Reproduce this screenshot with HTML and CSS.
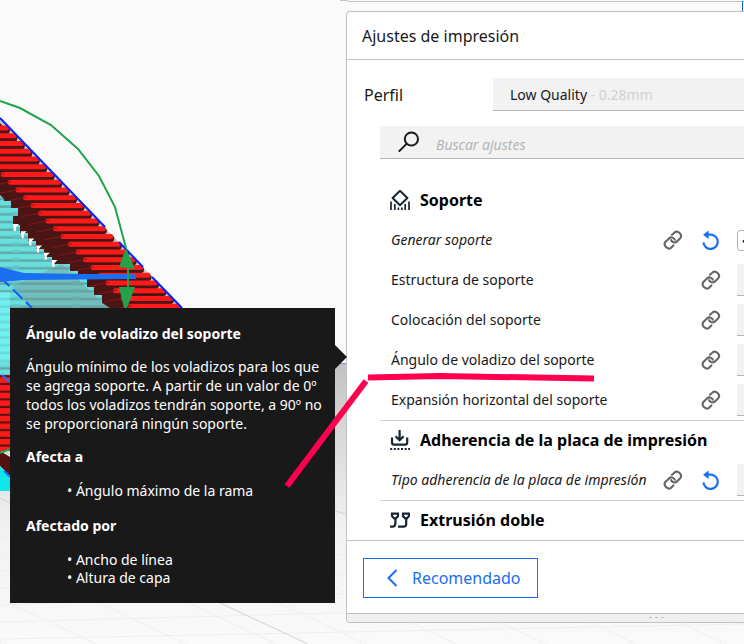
FILE: index.html
```html
<!DOCTYPE html>
<html lang="es">
<head>
    <meta charset="UTF-8">
    <meta name="viewport" content="width=device-width, initial-scale=1.0">
    <title>Ajustes de impresión</title>
    <link rel="stylesheet" href="styles.css">
</head>
<body>
    <!-- icons shared by the setting rows -->
    <svg class="sprite" aria-hidden="true">
        <symbol id="link" viewBox="0 0 20 20">
            <g fill="none" stroke="#666" stroke-width="2.1" stroke-linecap="round" stroke-linejoin="round">
                <path d="M9 4.8 L11.6 2.4 C14.8 -.2 19.8 4.6 17.4 8 L14 11.4 C11.8 13.3 9.2 12.4 8.2 10.2"/>
                <path d="M11.8 9.6 C10.6 7.2 8 6.6 6 8.4 L2.4 12 C-.2 15.4 4.6 20.2 8 17.8 L10.4 15.4"/>
            </g>
        </symbol>
        <symbol id="undo" viewBox="0 0 20 20">
            <path d="M6 4.6 H10.4 A7.2 7.2 0 1 1 2.4 12.4" fill="none" stroke="#196ef0" stroke-width="2.2"/>
            <path d="M7.6 .4 L2 4.7 L7.6 9 Z" fill="#196ef0"/>
        </symbol>
    </svg>

    <svg class="scene" width="744" height="644" aria-hidden="true">
        <defs>
            <linearGradient id="floor" x1="0" y1="0" x2="0" y2="1">
                <stop offset="0" stop-color="#c2c2c2"/>
                <stop offset=".25" stop-color="#d8d8d8"/>
                <stop offset=".6" stop-color="#f2f2f2"/>
                <stop offset="1" stop-color="#fafafa"/>
            </linearGradient>
            <pattern id="cyanRows" width="60" height="7.7" patternUnits="userSpaceOnUse">
                <rect width="60" height="7.7" fill="#69dede"/>
                <rect y="5.2" width="60" height="2.5" fill="#62a9a9"/>
                <rect x="12" y="4" width="8" height="3" fill="#5cc5c5"/>
            </pattern>
            <pattern id="redRows" width="20" height="7.7" patternUnits="userSpaceOnUse">
                <rect width="20" height="7.7" fill="#ff1a1a"/>
                <rect y="5.6" width="20" height="2.1" fill="#551010"/>
            </pattern>
        </defs>
        <rect y="363" width="744" height="281" fill="url(#floor)"/>
        <path d="M330 363.5 H350" stroke="#7f96d8"/>
        <g id="grid" fill="none" stroke="#eee"></g>
        <path d="M0 498 L12 504 M220 603 L308 644 M335 511 L346 514" stroke="#d2d2d2" fill="none"/>

        <path d="M0 118 L182 308 H0 Z" fill="#c9c9c9"/>
        <path d="M0 123 L176 308 H80 L40 270 L0 225 Z" fill="#4a1515"/>
        <g id="redLayers" fill="#ff1a1a"></g>
        <path d="M0 195 L4 199 V201 H11 V208 H18 V216 H13 V225 H20 V233 H28 V241 H36 V249 H44 V257 H52 V264 H70 V271 H78 V279 H87 V287 H94 V295 H102 V303 L110 308 H10 V380 H0 Z" fill="url(#cyanRows)"/>
        <path d="M28 279 L62 264 L108 308 H32 L12 286 Z" fill="#79908e" opacity=".4"/>
        <g id="tips" fill="#fff"></g>
        <rect y="292" width="10" height="70" fill="#7ff" opacity=".55"/>
        <rect y="375" width="10" height="76" fill="url(#redRows)"/>
        <path d="M0 451 L10 457 V476 L0 466 Z" fill="#551010"/>
        <path d="M0 466 L10 476 V491 H0 Z" fill="#0fe6ea"/>
        <path d="M0 453 L10 449" stroke="#22a24a" stroke-width="2"/>
        <path d="M0 118 L105 227 M119 242 L143 267 M152 277 L182 308" stroke="#0a1fff" stroke-width="2"/>
        <path d="M2 375 L10 382 M4 471 L10 477" stroke="#1a6fff" stroke-width="2"/>
        <path d="M0 277 L32 308" stroke="#0a5cff" stroke-width="2" stroke-dasharray="13 5"/>
        <path d="M0 101 L20 108 L51 125 L78 149 L99 176 L115 207 L126 248" fill="none" stroke="#22a24a" stroke-width="2"/>
        <path d="M0 267 L24 273 L80 274 H136 V279 L24 280 L0 282 Z" fill="#1a6ff0"/>
        <path d="M128 265 V290" stroke="#22a24a" stroke-width="2"/>
        <path d="M126 248 L135 269 L119 267 Z M119 287 H135 L127 308 H124 Z" fill="#22a24a"/>

        <path d="M340 .5 H348 M348 1.5 H744" stroke="#c4c4c4"/>
        <path d="M742.5 1 V11" stroke="#196ef0"/>
    </svg>

    <main class="panel">
        <header class="panel-header"><h1>Ajustes de impresión</h1></header>
        <div class="profile">
            <span id="profileLabel">Perfil</span>
            <button class="profile-select" aria-haspopup="listbox" aria-describedby="profileLabel">Low Quality <span>- 0.28mm</span></button>
        </div>
        <div class="settings">
            <label class="search">
                <svg width="24" height="24" viewBox="0 0 24 24" fill="none" stroke="#191919" stroke-width="2">
                    <circle cx="15.4" cy="9" r="6.6"/>
                    <path d="M10.8 13.6 L2.8 21.6"/>
                </svg>
                <input type="text" placeholder="Buscar ajustes" aria-label="Buscar ajustes">
            </label>

            <h2 class="category">
                <svg width="20" height="20" viewBox="0 0 20 20" fill="none" stroke="#192533" stroke-width="2">
                    <path d="M10 .8 L17.4 8 L10 15.2 L2.6 8 Z" stroke-linejoin="round"/>
                    <path d="M1 11.4 V20 M4.8 14 V20 M8.4 17.4 V20 M11.8 17.4 V20 M15.2 14 V20 M19 11.4 V20" stroke-width="1.7"/>
                </svg>
                Soporte
            </h2>
            <div class="setting changed">
                <label for="generate">Generar soporte</label>
                <svg class="icon"><use href="#link"/></svg>
                <svg class="icon"><use href="#undo"/></svg>
                <div class="value"><input type="checkbox" id="generate" checked></div>
            </div>
            <div class="setting">
                <label for="structure">Estructura de soporte</label>
                <svg class="icon"><use href="#link"/></svg>
                <div class="value"><select id="structure"></select></div>
            </div>
            <div class="setting">
                <label for="placement">Colocación del soporte</label>
                <svg class="icon"><use href="#link"/></svg>
                <div class="value"><select id="placement"></select></div>
            </div>
            <div class="setting">
                <label for="angle">Ángulo de voladizo del soporte</label>
                <svg class="icon"><use href="#link"/></svg>
                <div class="value"><input type="text" id="angle"></div>
            </div>
            <div class="setting">
                <label for="expansion">Expansión horizontal del soporte</label>
                <svg class="icon"><use href="#link"/></svg>
                <div class="value"><input type="text" id="expansion"></div>
            </div>

            <h2 class="category divided">
                <svg width="20" height="20" viewBox="0 0 20 20" fill="none" stroke="#192533" stroke-width="2.2">
                    <path d="M9.6 0 V10 M5.6 6.2 L9.6 10.2 L13.6 6.2"/>
                    <path d="M2 7.6 V12.4 Q2 14.6 4.2 14.6 H15 Q17.2 14.6 17.2 12.4 V7.6"/>
                    <path d="M.2 19 H20" stroke-width="1.8" stroke-dasharray="2 1.6"/>
                </svg>
                Adherencia de la placa de impresión
            </h2>
            <div class="setting changed">
                <label for="adhesion">Tipo adherencia de la placa de impresión</label>
                <svg class="icon"><use href="#link"/></svg>
                <svg class="icon"><use href="#undo"/></svg>
                <div class="value"><select id="adhesion"></select></div>
            </div>

            <h2 class="category divided">
                <svg width="20" height="20" viewBox="0 0 20 20" fill="none" stroke="#192533" stroke-width="2.2">
                    <path d="M2 3.6 H8 V6 L5.8 8.4 H4.2 L2 6 Z M13 3.6 H19 V6 L16.8 8.4 H15.2 L13 6 Z"/>
                    <path d="M5.4 8.4 V13 Q5.4 16.6 2.6 16.6 H0 M16.2 8.4 V14 Q16.2 16.6 13.6 16.6 H8"/>
                </svg>
                Extrusión doble
            </h2>
        </div>
        <footer class="panel-footer">
            <button class="recommended">
                <svg width="12" height="18" viewBox="0 0 12 18" fill="none" stroke="#196ef0" stroke-width="2">
                    <path d="M10.5 1 L2.5 9 L10.5 17"/>
                </svg>
                Recomendado
            </button>
        </footer>
        <div class="grip"><i></i><i></i><i></i></div>
    </main>

    <div class="tooltip" role="tooltip">
        <h3>Ángulo de voladizo del soporte</h3>
        <p>Ángulo mínimo de los voladizos para los que se agrega soporte. A partir de un valor de 0º todos los voladizos tendrán soporte, a 90º no se proporcionará ningún soporte.</p>
        <h3>Afecta a</h3>
        <ul>
            <li>Ángulo máximo de la rama</li>
        </ul>
        <h3>Afectado por</h3>
        <ul>
            <li>Ancho de línea</li>
            <li>Altura de capa</li>
        </ul>
    </div>

    <svg class="marks" width="744" height="644" fill="none" stroke="#ff0050" stroke-width="6" aria-hidden="true">
        <path d="M368 377.5 L440 376 L594 378.5"/>
        <path d="M366 381 L287 486"/>
    </svg>

    <script src="scene.js"></script>
</body>
</html>
```
FILE: styles.css
```css
* {
    box-sizing: border-box;
}
body {
    position: relative;
    margin: 0;
    min-height: 100vh;
    overflow: hidden;
    background: #fafafa;
    color: #191919;
    font-family: "Noto Sans", sans-serif;
    font-size: 14px;
}
h1, h2, h3, p, ul {
    margin: 0;
    padding: 0;
}
button, input, select {
    font: inherit;
    color: inherit;
}
.sprite {
    position: absolute;
    width: 0;
    height: 0;
}
.scene, .marks {
    position: absolute;
    top: 0;
    left: 0;
}
.marks {
    pointer-events: none;
}

/* settings panel, docked to the right edge */
.panel {
    position: relative;
    margin: 11px 0 0 346px;
    background: #fff;
    border: 1px solid #c0c0c0;
    border-right: 0;
    border-radius: 4px 0 0 4px;
    overflow: hidden;
}
.panel-header {
    display: flex;
    align-items: center;
    height: 48px;
    padding: 0 15px;
    border-bottom: 1px solid #c0c0c0;
}
.panel-header h1 {
    font-size: 16px;
    font-weight: 400;
}
.profile {
    display: flex;
    align-items: center;
    padding: 18px 0 15px 17px;
    font-size: 16px;
}
.profile > span {
    width: 129px;
}
.profile-select {
    flex: 1;
    height: 33px;
    padding: 0 17px;
    border: 0;
    border-bottom: 1px solid #b4b4b4;
    background: #f2f2f2;
    font-size: 14px;
    text-align: left;
}
.profile-select span {
    color: #d0d0d0;
}
.settings {
    padding-left: 33px;
}
.search {
    display: flex;
    align-items: center;
    gap: 16px;
    height: 33px;
    margin-bottom: 21px;
    padding: 0 16px;
    border-bottom: 1px solid #b4b4b4;
    background: #f2f2f2;
}
.search input {
    flex: 1;
    height: 32px;
    padding: 4px 0 0;
    border: 0;
    background: none;
    font-style: italic;
}
.search input::placeholder {
    color: #b4b4b4;
}
.category {
    display: flex;
    align-items: center;
    gap: 10px;
    height: 40px;
    padding-left: 10px;
    color: #000;
    font-size: 16px;
    font-weight: 700;
}
.divided {
    padding-bottom: 2px;
    border-top: 1px solid #d0d0d0;
}
.setting {
    display: flex;
    align-items: center;
    height: 40px;
    padding-left: 11px;
}
.setting label {
    flex: 1;
    min-width: 0;
    padding-bottom: 2px;
    white-space: nowrap;
}
.changed label {
    font-style: italic;
}
.icon {
    flex: none;
    width: 20px;
    height: 20px;
    margin-left: 18px;
}
.value {
    display: flex;
    flex: none;
    align-items: center;
    width: 7px;
    margin-left: 16px;
    overflow: hidden;
}
.value select, .value input[type="text"] {
    width: 100%;
    height: 32px;
    padding: 0;
    border: 0;
    border-bottom: 1px solid #b4b4b4;
    border-radius: 0;
    background: #f2f2f2;
    appearance: none;
}
.value input[type="checkbox"] {
    position: relative;
    flex: none;
    width: 21px;
    height: 21px;
    margin: 0;
    border: 1px solid #b4b4b4;
    border-radius: 3px;
    background: #fff;
    appearance: none;
}
.value input[type="checkbox"]:checked::after {
    content: "";
    position: absolute;
    top: 5px;
    left: 5px;
    width: 10px;
    height: 5px;
    border: solid #191919;
    border-width: 0 0 2px 2px;
    transform: rotate(-45deg);
}
.panel-footer {
    padding: 17px 16px 15px;
    border-top: 1px solid #c0c0c0;
}
.recommended {
    display: flex;
    align-items: center;
    gap: 14px;
    height: 40px;
    padding: 0 16px 0 22px;
    border: 1px solid #196ef0;
    background: #fff;
    color: #196ef0;
    font-size: 16px;
}
.grip {
    display: flex;
    justify-content: center;
    gap: 3px;
    height: 9px;
    padding: 3px 0 0 222px;
    border-top: 1px solid #c0c0c0;
    background: #f0f0f0;
}
.grip i {
    width: 3px;
    height: 1px;
    background: #c0c0c0;
}

.tooltip {
    position: absolute;
    top: 308px;
    left: 10px;
    width: 325px;
    padding: 16px 8px 16px 16px;
    background: #191919;
    color: #fff;
    line-height: 19px;
}
.tooltip::after {
    content: "";
    position: absolute;
    top: 37px;
    left: 100%;
    border: solid transparent;
    border-width: 12px 0 12px 12px;
    border-left-color: #191919;
}
.tooltip h3 {
    font-size: 14px;
    font-weight: 700;
}
.tooltip p {
    margin: 14px 0;
}
.tooltip ul {
    margin: 16px 0;
    padding-left: 41px;
    line-height: 18px;
    list-style: none;
}
.tooltip ul:last-child {
    margin-bottom: 0;
}
.tooltip li::before {
    content: "• ";
}
```
FILE: scene.js
```js
const NS = 'http://www.w3.org/2000/svg';

function add(parent, tag, attrs) {
    const el = document.createElementNS(NS, tag);
    for (const key in attrs) {
        el.setAttribute(key, attrs[key]);
    }
    document.getElementById(parent).appendChild(el);
}

// printed layers, each one shifted to the right of the one above
for (let i = 0; i < 24; i++) {
    const y = 128.3 + 7.75 * i;
    const end = 9 + 7.45 * i;
    const start = 8 + 7.5 * (i - 7);
    add('redLayers', 'rect', { x: end - 20, y: y - 1, width: 21, height: 6, rx: 3, fill: '#4a1515' });
    add('redLayers', 'rect', { x: start, y: y - 2.8, width: end - start, height: 5, rx: 2.5 });
    add('redLayers', 'path', { d: `M${start - 16} ${y + 3} L${start + 4} ${y - 1}`, stroke: '#8c1414', 'stroke-width': 1 });
}

// white tips between support and model
for (let i = 0; i < 6; i++) {
    const x = 13 + 7.7 * i;
    const y = 224 + 7.2 * i;
    add('tips', 'path', { d: `M${x} ${y} h6 l-3 3 v4 h-2 z` });
}

// build plate grid
for (let i = 0; i < 12; i++) {
    add('grid', 'path', { d: `M${-300 + i * 90} 500 l340 160` });
    add('grid', 'path', { d: `M0 ${520 + i * 17} L744 ${470 + i * 22}` });
}
```
